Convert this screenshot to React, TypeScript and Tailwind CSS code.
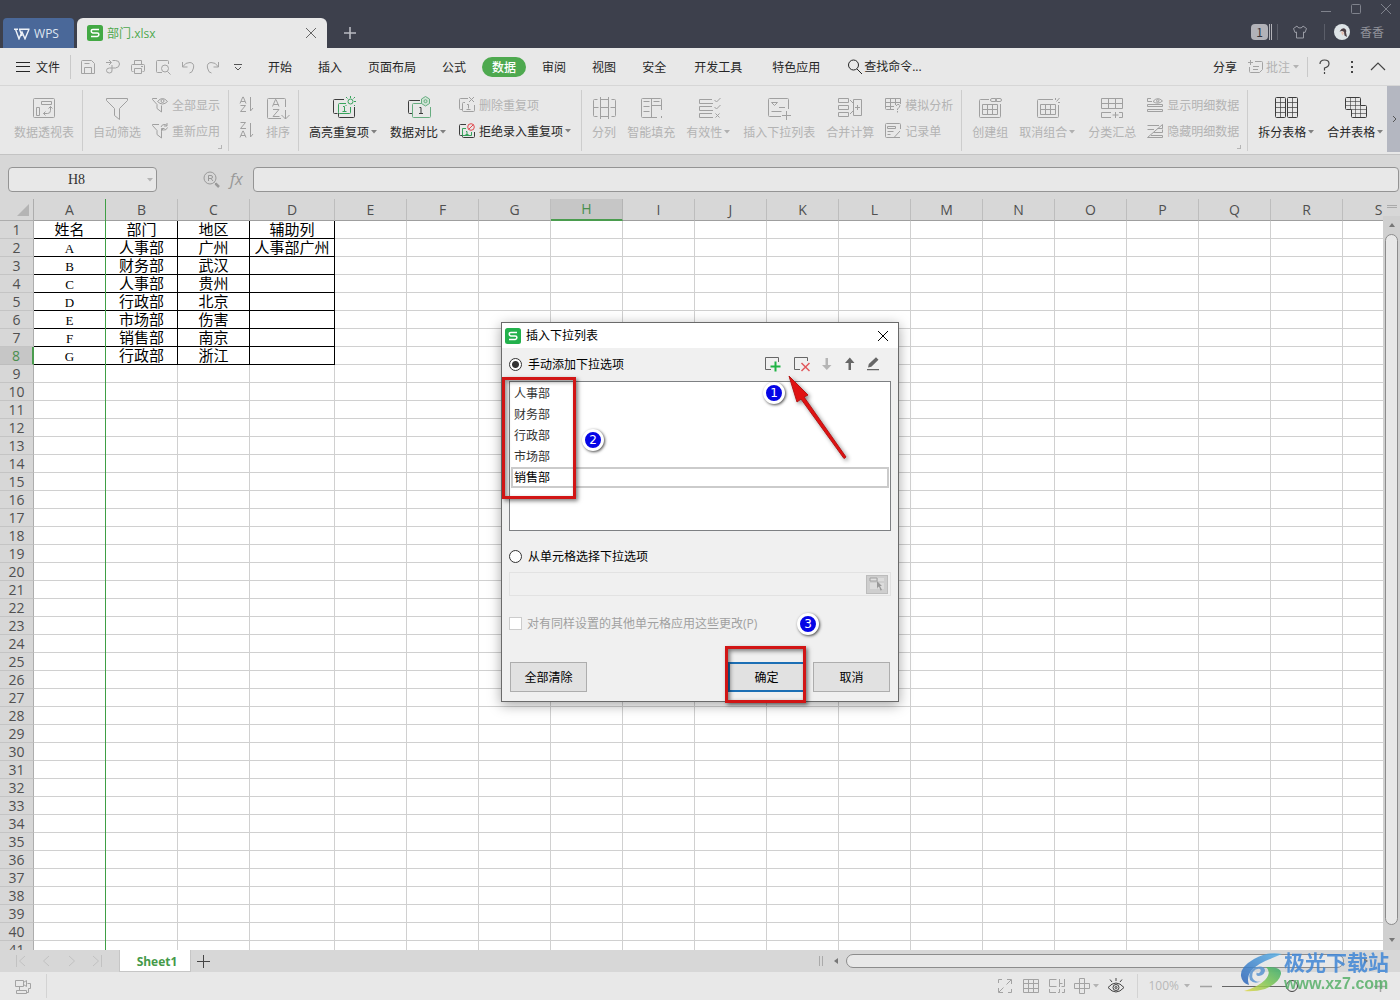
import React from 'react';

type IconProps = {
  size?: number;
  className?: string;
  children: React.ReactNode;
};

const Icon: React.FC<IconProps> = ({ size = 16, className = '', children }) => (
  <svg
    width={size}
    height={size}
    viewBox={`0 0 ${size} ${size}`}
    fill="none"
    stroke="currentColor"
    strokeWidth="1"
    className={`shrink-0 ${className}`}
    aria-hidden="true"
  >
    {children}
  </svg>
);

const Caret = ({ className = 'text-[#8a8a8a]' }: { className?: string }) => (
  <svg width="8" height="4" viewBox="0 0 8 4" className={`shrink-0 ${className}`} aria-hidden="true">
    <path d="M0 0h6L3 3.5z" fill="currentColor" />
  </svg>
);

const SheetLogo = ({ className = '' }: { className?: string }) => (
  <svg width="16" height="16" viewBox="0 0 16 16" fill="none" className={`shrink-0 ${className}`} aria-hidden="true">
    <rect width="16" height="16" rx="2.5" fill="currentColor" />
    <path d="M12 4.5H5.8Q4.2 4.5 4.2 6T5.800 7.900H10.300Q11.900 7.900 11.900 9.600T10.300 11.500H4" stroke="#fff" strokeWidth="1.5" />
  </svg>
);

/* ---------- ribbon icons ---------- */

const icons = {
  pivot: (
    <Icon size={24}>
      <rect x="1.500" y="2.500" width="21" height="19" rx="1" />
      <path d="M9.500 5.500h10v3h-10zM4.500 11.500h3v8h-3zM11.500 17.500h4q3 0 3-3v-4M16.500 12.500l2-2 2 2M13.500 15.500l-2 2 2 2" />
    </Icon>
  ),
  funnel: (
    <Icon size={24}>
      <path d="M1.500 2.500h21v2l-8 8v11l-5-4v-7l-8-8z" />
    </Icon>
  ),
  funnelEye: (
    <Icon>
      <path d="M5 1.500H.5v1l4.500 5v4l4.500 3.500V8.500" />
      <path d="M5.500 4.500Q10.500-1.500 15.500 4.500 10.500 9.500 5.500 4.500z" />
      <circle cx="10.500" cy="4" r="1.500" />
    </Icon>
  ),
  funnelRefresh: (
    <Icon>
      <path d="M7 1.500H.5v1l4.500 5v4l4.500 3.500V8.500l1-1" />
      <path d="M9 4q1-3 4-2.500l2 1M15 0v3h-3M15.500 4.500q-1 3-4 2.500l-2-1M9.500 8.500v-3h3" />
    </Icon>
  ),
  azDown: (
    <Icon>
      <path d="M1 7.500l2.800-6.500h.5L7 7.500M2 5.500h4M1.500 9.500h5l-5 6h5.500M11.500 1v14M11.500 15l2.500-3" />
    </Icon>
  ),
  zaDown: (
    <Icon>
      <path d="M1.500.5h5l-5 6h5.500M1 15.500l2.800-6.500h.5L7 15.500M2 13.500h4M11.500 1v14M11.500 15l2.500-3" />
    </Icon>
  ),
  sort: (
    <Icon size={24}>
      <path d="M19.500 11V3.500q0-1-1-1h-16q-1 0-1 1v18q0 1 1 1H15M19.500 14v9M15.500 19l4 4 4-4" />
      <path d="M6.500 10.500l3-7h.5l3 7M7.500 8.500h5M7 13.500h6l-6 7h6.500" />
    </Icon>
  ),
  highlight: (
    <Icon size={24}>
      <path d="M12 3.500H2.500q-1 0-1 1v12q0 1 1 1h3M22.500 11v9.500q0 1-1 1h-14q-1 0-1-1V17" />
      <path stroke="#37a35c" d="M14 7.500H7.500q-1 0-1 1v8q0 1 1 1h10q1 0 1-1V11M11 10.500h1.500v5M10.500 15.500h4" />
      <circle cx="18.500" cy="5.500" r="2.500" stroke="#37a35c" />
      <path stroke="#37a35c" d="M18.500 0v2M24 5.500h-2M14 1l1.500 1.500M23 1l-1.500 1.500M22 9l1 1M14.500 9l-1 1" />
    </Icon>
  ),
  compare: (
    <Icon size={24}>
      <path d="M13 4.500H2.500q-1 0-1 1v11q0 1 1 1h3" />
      <path stroke="#67ad80" d="M15 7.500H6.500q-1 0-1 1v12q0 1 1 1h16q1 0 1-1V11" />
      <path d="M12.500 11.500H14v6M12 17.500h4" />
      <path stroke="#67ad80" fill="#cfe3d5" d="M18.500.5l4 2.500v4.500l-4 2.500-4-2.500V3z" />
      <circle cx="18.500" cy="5.200" r="1.500" stroke="#67ad80" />
    </Icon>
  ),
  dedupe: (
    <Icon>
      <path d="M9 1.500H1.500q-1 0-1 1v9q0 1 1 1H3M6 5.500H4.500q-1 0-1 1v7q0 1 1 1h10q1 0 1-1V8M8 7.500h1.500v4M7.500 12.500h4M10 0l5 5M15 0l-5 5" />
    </Icon>
  ),
  reject: (
    <Icon>
      <path d="M7 1.500H1.500q-1 0-1 1v9q0 1 1 1H3M3.500 12v1.500q0 1 1 1h10q1 0 1-1V9" />
      <path stroke="#37a35c" d="M7 5.500H3.500v7h9V9M7 8.500h1v3M6.500 11.500h3" />
      <circle cx="12" cy="4" r="3.300" stroke="#e0474c" />
      <path stroke="#e0474c" d="M9.800 6.200l4.400-4.400" />
    </Icon>
  ),
  split: (
    <Icon size={24}>
      <path d="M5.500 3.500h-3q-1 0-1 1v15q0 1 1 1h3M8.500 1v22M16.500 1v22M8.500 3.500h8M8.500 20.500h8M19.500 3.500h3q1 0 1 1v15q0 1-1 1h-3M1.500 11.500h5M8.500 11.500h8M18.500 11.500h5" />
    </Icon>
  ),
  smartFill: (
    <Icon size={24}>
      <path d="M22.500 14V3.500q0-1-1-1h-18q-1 0-1 1v17q0 1 1 1H18M12.500 2.500v19M4.500 5.500h6M4.500 10.500h6M4.500 15.500h6M14.500 5.500h6M12.500 9.500h10M22.500 20v2" />
    </Icon>
  ),
  validity: (
    <Icon size={24}>
      <path d="M15 3.500H2.500v4H16M15 10.500H2.500v4H16M15 17.500H2.500v4H16M17.500 4l2 2 4-4M17.500 11l2 2 4-4M18.500 17.500l4 4M22.500 17.500l-4 4" />
    </Icon>
  ),
  insertList: (
    <Icon size={24}>
      <path d="M21.500 13V3.500q0-1-1-1h-18q-1 0-1 1v16q0 1 1 1H14M4.500 6.500h6l-3 3zM12 11.500h6M4.500 15.500h10M19.500 15v9M15 19.500h9" />
    </Icon>
  ),
  consolidate: (
    <Icon size={24}>
      <path d="M.5 2.500h10v4H.5zM.5 9.500h10v4H.5zM.5 16.500h10v4H.5zM15.500 3.500h8v16h-8zM19.500 9v5M17 11.500h5M12 4l3 3M12 18l3-3" />
    </Icon>
  ),
  whatIf: (
    <Icon>
      <path d="M9 12.500H1.500q-1 0-1-1V1.500h15V7M.5 5.500h15M.5 9.500H9M5.500 1.500v11M10.500 1.500V8M11 9q1-2 3-1.500 2 1 0 3l-1.500 1.500v1M12.500 14v1.500" />
    </Icon>
  ),
  form: (
    <Icon>
      <path d="M15.500 6V1.500q0-1-1-1h-13q-1 0-1 1v12q0 1 1 1H8M2.500 3.500h8v2h-8zM2.500 8.500h6M2.500 11.500h3M9.500 14l5.500-6M8 14.500h7" />
    </Icon>
  ),
  group: (
    <Icon size={24}>
      <path d="M11 3.500H2.500q-1 0-1 1v16q0 1 1 1h19q1 0 1-1V8M4.500 8.500h15v10h-15zM4.500 13.500h15M9.500 8.500v10M14.500 8.500v10" />
      <rect x="12.500" y="2.500" width="6" height="3" rx="1.500" />
      <rect x="17.500" y="2.500" width="6" height="3" rx="1.500" />
    </Icon>
  ),
  ungroup: (
    <Icon size={24}>
      <path d="M17 3.500H2.500q-1 0-1 1v16q0 1 1 1h19q1 0 1-1V9M4.500 8.500h15v10h-15zM4.500 13.500h15M9.500 8.500v10M14.500 8.500v10M19.500 2v2M23.500 2l-3 3.500M22 6.500h2" />
    </Icon>
  ),
  subtotal: (
    <Icon size={24}>
      <path d="M1.500 2.500h21v10h-21zM1.500 7.500h21M8.500 2.500v10M15.500 2.500v10M11 16.500H1.500v5H11M19 16.500h3.500v5H19M15.500 16v6M12.500 19h6" />
    </Icon>
  ),
  showDetail: (
    <Icon>
      <path d="M4 1.500H.5v3H5M.5 7.500h15v2H.5zM.5 12.500h15v2H.5zM6 4.500Q10.500-1 15.500 4 11 8 6 4.500z" />
      <circle cx="10.800" cy="3.800" r="1.200" />
    </Icon>
  ),
  hideDetail: (
    <Icon>
      <path d="M.5 2.500H12M.5 6.500H7M.5 14.500L15.500 1.500v4h-5M6.500 9.500h9v-3M.5 14.500h15v-2H4" />
    </Icon>
  ),
  splitTable: (
    <Icon size={24}>
      <rect x=".5" y="1.500" width="10" height="20" rx="1" />
      <rect x="12.500" y="1.500" width="10" height="20" rx="1" />
      <path opacity=".7" d="M5.500 1.500v20M17.500 1.500v20M.5 6.500h10M.5 11.500h10M.5 16.500h10M12.500 6.500h10M12.500 11.500h10M12.500 16.500h10" />
    </Icon>
  ),
  mergeTable: (
    <Icon size={24}>
      <path d="M2.500 1.500h13q1 0 1 1v7h5q1 0 1 1v10q0 1-1 1h-13q-1 0-1-1v-7h-5q-1 0-1-1v-10q0-1 1-1z" />
      <path opacity=".6" d="M6.500 1.500v12M11.500 1.500v20M16.500 9.500v12M1.500 5.500h15M1.500 9.500h15M7.500 13.500h15M7.500 17.500h15" />
    </Icon>
  ),
};

type IconName = keyof typeof icons;

interface ToolProps {
  icon: IconName;
  label: string;
  active?: boolean;
  caret?: boolean;
}

const tone = (active?: boolean) => (active ? 'text-[#262626]' : 'text-[#b3b3b3]');
const iconTone = (active?: boolean) => (active ? 'text-[#3c3c3c]' : 'text-[#a0a0a0]');
const caretTone = (active?: boolean) => (active ? 'text-[#808080]' : 'text-[#b0b0b0]');

const BigTool: React.FC<ToolProps> = ({ icon, label, active, caret }) => (
  <button type="button" className={`flex flex-col items-center gap-1 ${tone(active)}`}>
    <span className={iconTone(active)}>{icons[icon]}</span>
    <span className="flex items-center gap-0.5 whitespace-nowrap leading-4">
      {label}
      {caret && <Caret className={caretTone(active)} />}
    </span>
  </button>
);

const SmallTool: React.FC<ToolProps> = ({ icon, label, active, caret }) => (
  <button type="button" className={`flex h-[18px] items-center gap-1 whitespace-nowrap ${tone(active)}`}>
    <span className={iconTone(active)}>{icons[icon]}</span>
    <span className="flex items-center gap-0.5">
      {label}
      {caret && <Caret className={caretTone(active)} />}
    </span>
  </button>
);

const Group = ({ children, corner, last }: { children: React.ReactNode; corner?: boolean; last?: boolean }) => (
  <div className={`relative flex shrink-0 gap-[11px] pl-2.5 pr-2 pt-1.5 ${last ? '' : 'border-r border-[#cdcdcd]'}`}>
    {children}
    {corner && <span className="absolute bottom-0.5 right-1.5 size-1 border-b border-r border-[#b5b5b5]" />}
  </div>
);

const Stack = ({ children }: { children: React.ReactNode }) => (
  <div className="flex flex-col items-start gap-2">{children}</div>
);

const TitleBar = () => (
  <header className="flex h-12 shrink-0 items-end bg-[#3d404c] pl-[3px]">
    <button type="button" className="flex h-[30px] w-[71px] items-center justify-center gap-1 rounded-t bg-[#4a6899] pr-1 pt-0.5 font-['Open_Sans',sans-serif] text-[12px] text-[#dfe5f0]">
      <svg width="16" height="12" viewBox="0 0 16 12" fill="none" stroke="#eef2f8" strokeWidth="1.400" aria-hidden="true">
        <path d="M0 1.200h4M5 1.200h10.500M1.500 1.200l3.500 9.600L8 4l3 6.800 4-9.600M5.500 1.200L8 8" />
      </svg>
      WPS
    </button>
    <div className="ml-[3px] flex h-[30px] w-[250px] items-center rounded-t-md bg-[#e8e8e8] px-2.5 text-[#4ea94f]">
      <SheetLogo className="text-[#43a944]" />
      <span className="ml-1 flex-1">
        部门<span className="font-['Open_Sans',sans-serif]">.xlsx</span>
      </span>
      <button type="button" aria-label="关闭标签" className="text-[#666]">
        <Icon size={12}><path d="M1 1l10 10M11 1L1 11" /></Icon>
      </button>
    </div>
    <button type="button" aria-label="新建标签" className="mb-[9px] ml-[17px] text-[#b9bbc2]">
      <Icon size={12}><path d="M6 0v12M0 6h12" strokeWidth="1.600" /></Icon>
    </button>
    <div className="ml-auto flex h-full flex-col items-end">
      <div className="flex h-[18px] items-center gap-[18px] pr-2 text-[#7f828c]">
        <button type="button" aria-label="最小化"><Icon size={12}><path d="M1 8.500h10" /></Icon></button>
        <button type="button" aria-label="最大化"><Icon size={12}><rect x="1.500" y="1.500" width="9" height="9" rx="1" /></Icon></button>
        <button type="button" aria-label="关闭"><Icon size={12}><path d="M1 1l10 10M11 1L1 11" /></Icon></button>
      </div>
      <div className="flex h-7 items-center pr-4">
        <span className="flex h-4 gap-px">
          <span className="w-[17px] rounded-sm bg-[#b2b2b8] text-center leading-4 text-[#33353d]">1</span>
          <span className="w-[3px] border-x border-[#b2b2b8]" />
        </span>
        <span className="ml-[5px] h-4 w-px bg-[#5b5e69]" />
        <button type="button" aria-label="皮肤" className="ml-3.5 text-[#9a9ca5]">
          <Icon><path d="M5 2L1.500 4.500l1.500 4 1.500-.5v6h7V8l1.500.5 1.500-4L11 2q-.5 2-3 2T5 2z" /></Icon>
        </button>
        <span className="ml-4 h-4 w-px bg-[#5b5e69]" />
        <button type="button" className="ml-[9px] flex items-center gap-2.5 text-[#90929a]">
          <svg width="16" height="16" viewBox="0 0 16 16" aria-hidden="true">
            <circle cx="8" cy="8" r="8" fill="#dde3e6" />
            <path d="M5.500 7.500Q8 3.500 10.500 4.500q2.500 1.500 1.500 4l1 4.500-2.500-1.500L10 8 8 7z" fill="#4c3f45" />
            <path d="M7 8.500l2-1.500 1 2.500-1.500 2z" fill="#e4bfb0" />
          </svg>
          香香
        </button>
      </div>
    </div>
  </header>
);

const quickIcons: { label: string; icon: React.ReactNode }[] = [
  { label: '保存', icon: <path d="M1.500 14.500v-12q0-1 1-1h9l3 3v10zM4.500 14.500v-6h7v6M4.500 4.500h5" /> },
  { label: '输出', icon: <path d="M1 3.500h5M4 1l2.500 2.500L4 6M7.500 1.500h3q4 0 4 3.500t-4 4h-6q-3 0-3 2.500t3 2.500 2.500-3V6" /> },
  { label: '打印', icon: <path d="M4.500 5.500v-4h7v4M3.500 12.500h-1q-1 0-1-1v-5q0-1 1-1h11q1 0 1 1v5q0 1-1 1h-1M4.500 9.500h7v5h-7zM11 7.500h2" /> },
  { label: '打印预览', icon: <><path d="M13.500 5V2.500q0-1-1-1h-10q-1 0-1 1v10q0 1 1 1H7M12.500 12.500l3 3" /><circle cx="10" cy="9.500" r="3.500" /></> },
  { label: '撤销', icon: <path d="M2.500 3v5h5M2.500 8q3-5 7.500-4.500t3.500 5.500-4 5" /> },
  { label: '恢复', icon: <path d="M13.500 3v5h-5M13.500 8q-3-5-7.500-4.500T2.500 9t4 5" /> },
];

const MenuBar = () => (
  <div className="flex h-[38px] shrink-0 items-center border-b border-[#d6d6d6] bg-[#e8e8e8] text-[#262626]">
    <button type="button" className="ml-[15px] flex items-center gap-[5px]">
      <Icon><path d="M1 3.500h14M1 7.500h14M1 12.500h14" /></Icon>
      文件
    </button>
    <span className="ml-2.5 h-6 w-px bg-[#c9c9c9]" />
    <div className="ml-[9px] flex gap-[9px] text-[#a3a3a3]">
      {quickIcons.map((q) => (
        <button type="button" key={q.label} aria-label={q.label}>
          <Icon>{q.icon}</Icon>
        </button>
      ))}
    </div>
    <button type="button" aria-label="自定义快速访问" className="ml-3 text-[#555]">
      <Icon size={10}><path d="M1 2.500h8M2 5l3 3 3-3" /></Icon>
    </button>
    <nav className="ml-[25px] flex items-center gap-[26px] whitespace-nowrap">
      <button type="button">开始</button>
      <button type="button">插入</button>
      <button type="button">页面布局</button>
      <button type="button">公式</button>
      <button type="button" className="-mx-2.5 h-5 rounded-full bg-[#4ea94f] px-2.5 font-medium text-white">数据</button>
      <button type="button">审阅</button>
      <button type="button">视图</button>
      <button type="button">安全</button>
    </nav>
    <nav className="ml-7 flex items-center gap-[30px] whitespace-nowrap">
      <button type="button">开发工具</button>
      <button type="button">特色应用</button>
    </nav>
    <button type="button" className="ml-[27px] flex items-center whitespace-nowrap">
      <Icon size={17}><circle cx="6.500" cy="7" r="5" /><path d="M10 11l5 5" /></Icon>
      <span className="font-['Open_Sans','Noto_Sans_CJK_SC',sans-serif]">查找命令...</span>
    </button>
    <div className="ml-auto flex items-center whitespace-nowrap pr-3.5">
      <button type="button">分享</button>
      <button type="button" className="ml-2.5 flex items-center gap-[3px] text-[#b3b3b3]">
        <Icon className="text-[#a3a3a3]"><path d="M3.500 1v5M1 3.500h5M8 2.500h6.500q1 0 1 1v7l-3 3H3.500q-1 0-1-1V8M6 7.500h6M6 10.500h5" /></Icon>
        批注
        <Caret className="text-[#b3b3b3]" />
      </button>
      <span className="ml-1.5 h-5 w-px bg-[#c9c9c9]" />
      <button type="button" aria-label="帮助" className="ml-2 text-[#444]">
        <Icon><path d="M4 5q0-4 4.500-4T13 4.500 8.500 9v2.500M8.500 13v2" strokeWidth="1.200" /></Icon>
      </button>
      <button type="button" aria-label="更多" className="ml-3 text-[#444]">
        <Icon><path d="M7 2h2v2H7zM7 7h2v2H7zM7 12h2v2H7z" fill="currentColor" stroke="none" /></Icon>
      </button>
      <button type="button" aria-label="收起功能区" className="ml-2.5 text-[#444]">
        <Icon><path d="M1 11l7-7 7 7" strokeWidth="1.200" /></Icon>
      </button>
    </div>
  </div>
);

const Ribbon = () => (
  <div className="flex h-[69px] shrink-0 overflow-hidden border-b border-[#c3c3c3] bg-[#e8e8e8]">
    <div className="flex flex-1 overflow-hidden pb-[3px] pl-1 pt-1">
      <Group>
        <BigTool icon="pivot" label="数据透视表" />
      </Group>
      <Group corner>
        <BigTool icon="funnel" label="自动筛选" />
        <Stack>
          <SmallTool icon="funnelEye" label="全部显示" />
          <SmallTool icon="funnelRefresh" label="重新应用" />
        </Stack>
      </Group>
      <Group>
        <div className="flex flex-col gap-2.5 text-[#a0a0a0]">
          <button type="button" aria-label="升序">{icons.azDown}</button>
          <button type="button" aria-label="降序">{icons.zaDown}</button>
        </div>
        <BigTool icon="sort" label="排序" />
      </Group>
      <Group>
        <BigTool icon="highlight" label="高亮重复项" active caret />
        <BigTool icon="compare" label="数据对比" active caret />
        <Stack>
          <SmallTool icon="dedupe" label="删除重复项" />
          <SmallTool icon="reject" label="拒绝录入重复项" active caret />
        </Stack>
      </Group>
      <Group>
        <BigTool icon="split" label="分列" />
        <BigTool icon="smartFill" label="智能填充" />
        <BigTool icon="validity" label="有效性" caret />
        <BigTool icon="insertList" label="插入下拉列表" />
        <BigTool icon="consolidate" label="合并计算" />
        <Stack>
          <SmallTool icon="whatIf" label="模拟分析" />
          <SmallTool icon="form" label="记录单" />
        </Stack>
      </Group>
      <Group corner>
        <BigTool icon="group" label="创建组" />
        <BigTool icon="ungroup" label="取消组合" caret />
        <BigTool icon="subtotal" label="分类汇总" />
        <Stack>
          <SmallTool icon="showDetail" label="显示明细数据" />
          <SmallTool icon="hideDetail" label="隐藏明细数据" />
        </Stack>
      </Group>
      <Group last>
        <BigTool icon="splitTable" label="拆分表格" active caret />
        <BigTool icon="mergeTable" label="合并表格" active caret />
      </Group>
    </div>
    <button type="button" aria-label="向右滚动" className="mb-0.5 flex w-[13px] shrink-0 items-center justify-center bg-[#b4b7c1] text-[#555]">
      <Icon size={8}><path d="M3 1l3 3-3 3" /></Icon>
    </button>
  </div>
);

const FormulaBar = () => (
  <div className="flex h-11 shrink-0 items-center bg-[#d7d7d7] pl-2 pr-px pt-1">
    <div className="relative">
      <input
        aria-label="名称框"
        defaultValue="H8"
        className="block h-[25px] w-[149px] rounded border border-[#949494] bg-[#e8e8e8] pr-3 pt-0.5 text-center font-['Liberation_Serif',serif] text-[14px] text-[#333]"
      />
      <Caret className="absolute right-0.5 top-[11px] text-[#b5b5b5]" />
    </div>
    <button type="button" aria-label="浏览公式" className="ml-[46px] text-[#999]">
      <Icon size={17}>
        <circle cx="7" cy="7" r="6" />
        <path d="M5.500 10V4.500H8q1.500 0 1.500 1.500T8 7.500H5.500M8 7.500l2 2.500M11.500 11.500l4.500 4.500" />
        <path d="M12.500 12.500l3.500 3.500" strokeWidth="2.500" />
      </Icon>
    </button>
    <label htmlFor="formula" className="ml-2.5 w-[23px] font-['Open_Sans',sans-serif] text-[16px] italic leading-5 text-[#999]">fx</label>
    <input id="formula" className="h-[25px] min-w-0 flex-1 rounded border border-[#949494] bg-[#e8e8e8] px-2" />
  </div>
);

const columns = 'ABCDEFGHIJKLMNOPQRS'.split('');
const rows = Array.from({ length: 41 }, (_, i) => i + 1);

const data: string[][] = [
  ['姓名', '部门', '地区', '辅助列'],
  ['A', '人事部', '广州', '人事部广州'],
  ['B', '财务部', '武汉', ''],
  ['C', '人事部', '贵州', ''],
  ['D', '行政部', '北京', ''],
  ['E', '市场部', '伤害', ''],
  ['F', '销售部', '南京', ''],
  ['G', '行政部', '浙江', ''],
];

const cellBorder = (r: number, c: number) =>
  r < data.length && c < 4 ? 'border-b-black border-r-black' : 'border-b-[#d0d0d0] border-r-[#d0d0d0]';

const Sheet = () => (
  <div className="flex min-h-0 flex-1">
    <div className="relative min-w-0 flex-1 overflow-hidden bg-white">
      <table className="w-[1415px] table-fixed border-separate border-spacing-0">
        <colgroup>
          <col className="w-[34px]" />
          {columns.map((c) => (
            <col key={c} className={c === 'D' ? 'w-[85px]' : 'w-[72px]'} />
          ))}
        </colgroup>
        <thead>
          <tr className="h-[22px] bg-[#d7d7d7] font-['Open_Sans',sans-serif] text-[14px] leading-5 text-[#505050]">
            <th scope="col" aria-label="全选" className="border-b border-r border-[#adadad] p-0">
              <svg width="12" height="12" viewBox="0 0 12 12" className="ml-[17px]" aria-hidden="true">
                <path d="M12 0v12H0z" fill="#b4b4b4" />
              </svg>
            </th>
            {columns.map((c) => (
              <th
                key={c}
                scope="col"
                className={`border-b border-r p-0 font-normal ${
                  c === 'H' ? 'border-b-2 border-b-[#4a9c4e] border-r-[#b4b4b4] bg-[#c6c6c6] text-[#4a8f4e]' : 'border-b-[#9f9f9f] border-r-[#bdbdbd]'
                }`}
              >
                {c}
              </th>
            ))}
          </tr>
        </thead>
        <tbody>
          {rows.map((n, r) => (
            <tr key={n} className="h-[18px]">
              <th
                scope="row"
                className={`border-b border-r p-0 font-['Open_Sans',sans-serif] text-[14px] font-normal leading-[17px] ${
                  n === 8 ? 'border-b-[#bdbdbd] border-r-2 border-r-[#4a9c4e] bg-[#c6c6c6] text-[#4a8f4e]' : 'border-b-[#c4c4c4] border-r-[#adadad] bg-[#d7d7d7] text-[#505050]'
                }`}
              >
                {n}
              </th>
              {columns.map((c, i) => (
                <td
                  key={c}
                  className={`whitespace-nowrap border-b border-r p-0 pt-0.5 text-center font-['Liberation_Serif','Noto_Sans_CJK_SC',serif] leading-[15px] text-black ${i === 0 && r > 0 ? 'text-[13px]' : 'text-[15px]'} ${cellBorder(r, i)}`}
                >
                  {data[r]?.[i]}
                </td>
              ))}
            </tr>
          ))}
        </tbody>
      </table>
      {/* freeze line after column A */}
      <div className="absolute inset-y-0 left-[105px] w-px bg-[#3f9f45]" />
    </div>
    <div className="flex w-[17px] shrink-0 flex-col items-center bg-[#d0d0d0] text-[#777]">
      <div className="flex h-[17px] w-full justify-center bg-[#d7d7d7] pt-1.5">
        <span className="h-[3px] w-2.5 border-y border-[#aaa]" />
      </div>
      <svg width="6" height="4" viewBox="0 0 6 4" className="my-[7px] shrink-0" aria-hidden="true"><path d="M0 4h6L3 0z" fill="currentColor" /></svg>
      <div className="w-[13px] flex-1 rounded-full border border-[#8c8c8c] bg-[#e8e8e8]" />
      <svg width="6" height="4" viewBox="0 0 6 4" className="mb-2 mt-[13px] shrink-0" aria-hidden="true"><path d="M0 0h6L3 4z" fill="currentColor" /></svg>
    </div>
  </div>
);

const TabStrip = () => (
  <div className="flex h-[22px] shrink-0 items-center bg-[#d7d7d7]">
    <div className="flex w-[119px] gap-2.5 pl-3 text-[#c2c2c2]">
      <button type="button" aria-label="第一张"><Icon><path d="M4.500 2v12M13 3L7.500 8l5.500 5" /></Icon></button>
      <button type="button" aria-label="上一张"><Icon><path d="M11 3L5.500 8l5.500 5" /></Icon></button>
      <button type="button" aria-label="下一张"><Icon><path d="M5 3l5.500 5L5 13" /></Icon></button>
      <button type="button" aria-label="最后一张"><Icon><path d="M3 3l5.500 5L3 13M11.500 2v12" /></Icon></button>
    </div>
    <button type="button" className="h-full w-[72px] border border-t-0 border-[#c6c6c6] bg-white pl-1 pt-0.5 font-['Open_Sans',sans-serif] text-[12px] font-bold leading-4 text-[#459a49]">Sheet1</button>
    <button type="button" aria-label="新建工作表" className="ml-[5px] text-[#444]">
      <Icon size={14}><path d="M7.500 1v13M1 7.500h13" /></Icon>
    </button>
    <div className="ml-auto flex w-[41.5%] items-center pr-8 text-[#777]">
      <span className="h-2.5 w-1 border-x border-[#aaa]" />
      <svg width="4" height="6" viewBox="0 0 4 6" className="ml-[11px]" aria-hidden="true"><path d="M4 0v6L0 3z" fill="currentColor" /></svg>
      <div className="ml-2 h-3.5 flex-1 rounded-full border border-[#8c8c8c] bg-[#e8e8e8]" />
      <svg width="4" height="6" viewBox="0 0 4 6" className="ml-5" aria-hidden="true"><path d="M0 0v6l4-3z" fill="currentColor" /></svg>
    </div>
  </div>
);

const StatusBar = () => (
  <footer className="flex h-7 shrink-0 items-center bg-[#e8e8e8] text-[#a3a3a3]">
    <button type="button" aria-label="录制宏" className="ml-[15px]">
      <Icon size={17}><path d="M.5 2.500h8v6h-8zM8.500 4.500l3-2v6l-3-2M4.500 8.500v4M1.500 12.500h10v3h-10zM11.500 14.500h2v-4h2v-5h-3" /></Icon>
    </button>
    <span className="ml-3.5 h-6 w-px bg-[#d3d3d3]" />
    <div className="ml-auto flex items-center pr-3.5">
      <button type="button" aria-label="全屏显示"><Icon><path d="M10 1.500h4.500V6M6 14.500H1.500V10M1.500 5V1.500H5M14.500 11v3.500H11M14 2L9.500 6.500M2 14l4.500-4.500" /></Icon></button>
      <button type="button" aria-label="普通视图" className="ml-2.5"><Icon><path d="M.5 1.500h15v13H.5zM5.500 1.500v13M10.500 1.500v13M.5 5.500h15M.5 10.500h15" /></Icon></button>
      <button type="button" aria-label="分页预览" className="ml-2.5"><Icon><path d="M.5 5V1.500h7M.5 5v3.500h7M10.500 1v8M10.500 5.500h3M15.500 1v7.500h-3M.5 11v3.500H7M9 14.500h1.500V11M13 14.500h2.500V11" /></Icon></button>
      <button type="button" aria-label="阅读模式" className="ml-[9px] flex items-center gap-[3px]">
        <Icon><path d="M5.500.5h5v15h-5zM5.500 5.500h-5v5h5M10.500 5.500h5v5h-5M5.500 5.500h5M5.500 10.500h5" /></Icon>
        <Caret className="text-[#b3b3b3]" />
      </button>
      <button type="button" aria-label="护眼模式" className="ml-1.5 text-[#444]">
        <Icon size={18}><path d="M1 10.500Q9 1.500 17 10.500 9 19.500 1 10.500zM9 1v3M3 2.500L5 5M15 2.500L13 5" /><circle cx="9" cy="10.500" r="3" /><circle cx="9" cy="10.500" r="1" /></Icon>
      </button>
      <span className="ml-3 h-6 w-px bg-[#d3d3d3]" />
      <button type="button" className="ml-2.5 flex items-center gap-[5px] font-['Open_Sans',sans-serif] text-[12px] text-[#b8b8b8]">
        100%
        <Caret className="text-[#b3b3b3]" />
      </button>
      <button type="button" aria-label="缩小" className="ml-2"><Icon size={12}><path d="M0 6.500h12" strokeWidth="1.500" /></Icon></button>
      <input
        type="range"
        aria-label="显示比例"
        min={10}
        max={190}
        defaultValue={96}
        className="ml-2.5 h-4 w-[146px] appearance-none bg-[linear-gradient(to_right,#666_48%,transparent_48%)] bg-[length:100%_1px] bg-center bg-no-repeat [&::-webkit-slider-thumb]:size-3 [&::-webkit-slider-thumb]:appearance-none [&::-webkit-slider-thumb]:rounded-full [&::-webkit-slider-thumb]:border [&::-webkit-slider-thumb]:border-[#444] [&::-webkit-slider-thumb]:bg-[#e8e8e8]"
      />
      <button type="button" aria-label="放大" className="ml-1.5"><Icon size={12}><path d="M0 6.500h12M6.500 0v12" strokeWidth="1.500" /></Icon></button>
    </div>
  </footer>
);

const Badge = ({ n, className }: { n: number; className: string }) => (
  <span
    className={`absolute flex size-[22px] items-center justify-center rounded-full border-[3px] border-white bg-[#0505e6] font-['DejaVu_Sans',sans-serif] text-[12px] leading-none text-white shadow-[1px_1px_3px_rgba(0,0,0,0.7)] ${className}`}
  >
    {n}
  </span>
);

const options = ['人事部', '财务部', '行政部', '市场部', '销售部'];

const radioClass =
  'size-[13px] appearance-none rounded-full border border-[#333] bg-white checked:bg-[radial-gradient(circle,#333_3px,#fff_4px)]';

const DropdownDialog = () => {
  const [mode, setMode] = React.useState<'manual' | 'cells'>('manual');
  const [selected, setSelected] = React.useState(4);

  return (
    <section
      role="dialog"
      aria-label="插入下拉列表"
      className="absolute left-1/2 top-[322px] w-[398px] -translate-x-1/2 border border-[#6a6a6a] bg-[#f0f0f0] text-black shadow-[0_3px_12px_rgba(0,0,0,0.35)]"
    >
      <div className="flex h-[25px] items-center bg-white pl-[3px] pr-[9px]">
        <SheetLogo className="text-[#22b14c]" />
        <h2 className="ml-[5px] flex-1 pb-0.5">插入下拉列表</h2>
        <button type="button" aria-label="关闭对话框">
          <Icon size={12}><path d="M1 1l10 10M11 1L1 11" /></Icon>
        </button>
      </div>

      <div className="px-[7px] pb-[9px]">
        <div className="mb-px flex h-8 items-center">
          <label className="flex items-center gap-1.5">
            <input type="radio" name="mode" className={radioClass} checked={mode === 'manual'} onChange={() => setMode('manual')} />
            手动添加下拉选项
          </label>
          <div className="ml-auto mr-2.5 flex items-center gap-[7px] text-[#666]">
            <button type="button" aria-label="添加" className="flex w-5">
              <Icon><path d="M13.500 6V1.500h-13v12H6" /><path d="M10.500 5.500v10M5.500 10.500h10" stroke="#1fb344" strokeWidth="2" /></Icon>
            </button>
            <button type="button" aria-label="删除" className="flex w-5 justify-center">
              <Icon><path d="M13.500 5V1.500h-13v12H6" /><path d="M7.500 7l8 8M15.500 7l-8 8" stroke="#e0585c" strokeWidth="1.500" /></Icon>
            </button>
            <button type="button" aria-label="下移" className="text-[#b5b5b5]">
              <Icon><path d="M6.500 2h2.500v7h3.500L7.800 14 3 9h3.500z" fill="currentColor" stroke="none" /></Icon>
            </button>
            <button type="button" aria-label="上移">
              <Icon><path d="M6.500 14h2.500V7h3.500L7.800 1.500 3 7h3.500z" fill="currentColor" stroke="none" /></Icon>
            </button>
            <button type="button" aria-label="编辑">
              <Icon><path d="M3 11.500l.8-3.500L11 1.200l2.500 2.500L6.300 10.800zM2 13h12v1.200H2z" fill="currentColor" stroke="none" /></Icon>
            </button>
          </div>
        </div>

        <ul className="h-[150px] border border-[#7e8083] bg-white px-px pt-px text-[#333]">
          {options.map((o, i) => (
            <li
              key={o}
              onClick={() => setSelected(i)}
              className={`h-[21px] border-2 pl-px leading-4 ${i === selected ? 'border-[#cbcbcb] text-black' : 'border-transparent'}`}
            >
              {o}
            </li>
          ))}
        </ul>

        <label className="mt-[15px] flex h-5 w-fit items-center gap-1.5">
          <input type="radio" name="mode" className={radioClass} checked={mode === 'cells'} onChange={() => setMode('cells')} />
          从单元格选择下拉选项
        </label>

        <div className="mt-1.5 flex h-6 items-center border border-[#e2e2e2] pr-0.5">
          <input aria-label="数据区域" disabled className="min-w-0 flex-1 bg-transparent px-1" />
          <button type="button" aria-label="选择区域" disabled className="flex h-[19px] w-[22px] items-center justify-center border border-[#bcbcbc] bg-[#cecece]">
            <svg width="16" height="14" viewBox="0 0 16 14" aria-hidden="true">
              <path d="M1 1h7v3H1z" fill="#e0e0e0" stroke="#a0a0a0" />
              <path d="M9 1h6v3H9zM1 6h7v6H1zM9 6h6v6H9z" fill="#dcdcdc" />
              <path d="M8 4l5 5h-2l2 4-1.500.5-1.500-4-2 1.500z" fill="#989898" />
            </svg>
          </button>
        </div>

        <label className="mt-[17px] flex h-5 w-fit items-center gap-[5px] text-[#a0a0a0]">
          <input type="checkbox" disabled className="size-[13px] appearance-none border border-[#ccc] bg-white" />
          <span>
            对有同样设置的其他单元格应用这些更改<span className="font-['Open_Sans',sans-serif]">(P)</span>
          </span>
        </label>

        <div className="mt-[29px] flex h-[30px] px-px">
          <button type="button" className="w-[77px] border border-[#adadad] bg-[#e1e1e1]">全部清除</button>
          <button type="button" className="ml-auto w-[77px] border-2 border-[#1c6fb5] bg-[#e1e1e1]">确定</button>
          <button type="button" className="ml-2 w-[77px] border border-[#adadad] bg-[#e1e1e1]">取消</button>
        </div>
      </div>

      {/* step markers */}
      <div className="pointer-events-none absolute left-0 top-[54px] h-[122px] w-[74px] border-[3px] border-[#d11515] shadow-[2px_2px_4px_rgba(0,0,0,0.5),inset_2px_2px_4px_rgba(0,0,0,0.4)]" />
      <div className="pointer-events-none absolute left-[223px] top-[323px] h-[57px] w-[81px] border-[3px] border-[#d11515] shadow-[2px_2px_4px_rgba(0,0,0,0.5),inset_2px_2px_4px_rgba(0,0,0,0.5)]" />
      <svg width="80" height="100" viewBox="0 0 80 100" className="pointer-events-none absolute left-[278px] top-11 drop-shadow-[2px_2px_2px_rgba(0,0,0,0.45)]" aria-hidden="true">
        <path d="M9 9l19 19-4 2 42 60-2 1.500L21 32l-4 3z" fill="#e01212" stroke="#b51414" strokeWidth="1" />
      </svg>
      <Badge n={1} className="left-[261px] top-[59px]" />
      <Badge n={2} className="left-20 top-[106px]" />
      <Badge n={3} className="left-[295px] top-[290px]" />
    </section>
  );
};

const Watermark = () => (
  <div className="pointer-events-none absolute bottom-1.5 right-[11px] flex items-center opacity-85">
    <svg width="44" height="40" viewBox="0 0 44 40" aria-hidden="true">
      <defs>
        <linearGradient id="swirlBlue" x1="0" y1="1" x2="1" y2="0">
          <stop offset="0" stopColor="#2b62b8" />
          <stop offset="1" stopColor="#5cb4e8" />
        </linearGradient>
        <linearGradient id="swirlGreen" x1="0" y1="1" x2="1" y2="0">
          <stop offset="0" stopColor="#e6d84a" />
          <stop offset=".5" stopColor="#7cc653" />
          <stop offset="1" stopColor="#35a86a" />
        </linearGradient>
      </defs>
      <path d="M42 2Q28-1 14 7 0 15 1 24q1 7 8 9-3-8 3-15 7-7 18-11 7-3 12-5z" fill="url(#swirlBlue)" />
      <path d="M26 15q16-1 15 7-2 9-16 15-10 3-21 2 14-4 21-11 7-8 1-13z" fill="url(#swirlGreen)" />
      <path d="M10 28q-3-9 6-13 8-2 9 3 0 5-6 6-4 0-2-4 0 2 2 1 3-2 1-4-4-1-7 3-2 5 1 8 3 3 7 1-6 4-11-1z" fill="#5a94d0" />
    </svg>
    <div className="flex flex-col font-bold">
      <span className="font-['Open_Sans','Noto_Sans_CJK_SC',sans-serif] text-[21px] leading-[24px] text-[#3f86d6]">极光下载站</span>
      <span className="font-['Liberation_Sans',sans-serif] text-[16px] leading-5 text-[#58b06a]">www.xz7.com</span>
    </div>
  </div>
);

const App = () => (
  <div className="relative flex h-screen w-full flex-col overflow-hidden bg-[#d7d7d7] font-['Noto_Sans_CJK_SC',sans-serif] text-[12px] leading-4">
    <TitleBar />
    <MenuBar />
    <Ribbon />
    <FormulaBar />
    <Sheet />
    <TabStrip />
    <StatusBar />
    <DropdownDialog />
    <Watermark />
  </div>
);

export default App;
